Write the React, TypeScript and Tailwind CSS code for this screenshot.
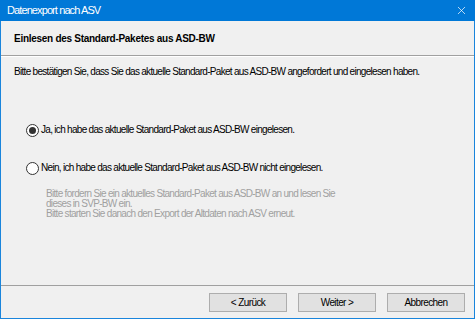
import { X } from "lucide-react";

function Radio({ checked }: { checked: boolean }) {
  return (
    <span className="flex h-[13px] w-[13px] shrink-0 items-center justify-center rounded-full border border-[#333333] bg-white">
      {checked && <span className="h-[7px] w-[7px] rounded-full bg-[#333333]" />}
    </span>
  );
}

function Button({ label }: { label: string }) {
  return (
    <button className="h-[19px] w-[78px] border border-[#adadad] bg-[#e1e1e1] text-[10px] tracking-[-0.6px] text-black">
      {label}
    </button>
  );
}

export default function App() {
  return (
    <div
      className="flex h-[319px] w-[475px] flex-col border-x border-b border-[#1a85dc] bg-[#f0f0f0] text-black"
      style={{ fontFamily: '"Liberation Sans", Arial, sans-serif' }}
    >
      {/* title bar */}
      <div className="-mx-px flex h-[21px] shrink-0 items-center justify-between bg-[#0078d7] pl-[7px] pr-[7px] text-white">
        <span className="text-[11px] tracking-[-0.9px]">Datenexport nach ASV</span>
        <X className="h-[13px] w-[13px]" strokeWidth={1.3} />
      </div>

      {/* header */}
      <div className="flex h-[35px] shrink-0 items-center border-b border-[#a0a0a0] pl-[13px]">
        <span className="text-[10px] font-bold tracking-[-0.28px]">Einlesen des Standard-Paketes aus ASD-BW</span>
      </div>

      {/* body */}
      <div className="flex flex-1 flex-col border-t border-white pl-[13px] text-[10px] leading-[12px] tracking-[-0.7px]">
        <p className="mt-[9px]">
          Bitte bestätigen Sie, dass Sie das aktuelle Standard-Paket aus ASD-BW angefordert und eingelesen haben.
        </p>

        <div className="mt-[45px] flex h-[14px] items-center gap-[2px] pl-[12px]">
          <Radio checked />
          <span>Ja, ich habe das aktuelle Standard-Paket aus ASD-BW eingelesen.</span>
        </div>

        <div className="mt-[24px] flex h-[14px] items-center gap-[2px] pl-[12px]">
          <Radio checked={false} />
          <span>Nein, ich habe das aktuelle Standard-Paket aus ASD-BW nicht eingelesen.</span>
        </div>

        <div className="mt-[14px] pl-[32px] leading-[10px] text-[#a0a0a0]">
          <p>Bitte fordern Sie ein aktuelles Standard-Paket aus ASD-BW an und lesen Sie</p>
          <p>dieses in SVP-BW ein.</p>
          <p>Bitte starten Sie danach den Export der Altdaten nach ASV erneut.</p>
        </div>
      </div>

      {/* footer */}
      <div className="flex h-[33px] shrink-0 items-start justify-end gap-[11px] border-t border-[#a0a0a0] pr-[9px] pt-[7px]">
        <Button label="< Zurück" />
        <Button label="Weiter >" />
        <Button label="Abbrechen" />
      </div>
    </div>
  );
}
